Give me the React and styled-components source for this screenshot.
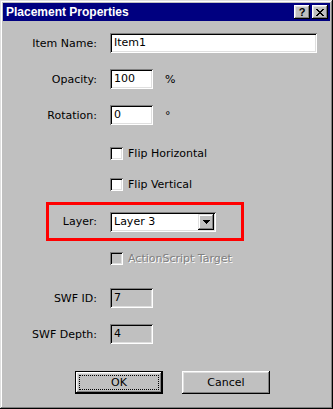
import React from 'react'
import styled, { createGlobalStyle } from 'styled-components'

const Global = createGlobalStyle`
    html, body { margin: 0; padding: 0; background: #c0c0c0; }
    body { font-family: "DejaVu Sans", "Liberation Sans", sans-serif; font-size: 11px; color: #000; }
`

const Window = styled.div`
    width: 333px;
    height: 409px;
    box-sizing: border-box;
    padding: 3px;
    background: #c0c0c0;
    box-shadow: inset -1px -1px #000, inset 1px 1px #dfdfdf, inset -2px -2px #808080, inset 2px 2px #fff;
    display: flex;
    flex-direction: column;
`

const TitleBar = styled.div`
    height: 18px;
    background: #000080;
    display: flex;
    align-items: center;
    padding: 0 2px 0 3px;
`

const Title = styled.div`
    flex: 1;
    color: #fff;
    font-family: "Liberation Sans", Arial, sans-serif;
    font-weight: bold;
    font-size: 12px;
`

const TitleButton = styled.div`
    width: 16px;
    height: 14px;
    box-sizing: border-box;
    margin-left: ${p => p.$gap || 0}px;
    background: #c0c0c0;
    box-shadow: inset -1px -1px #000, inset 1px 1px #fff, inset -2px -2px #808080, inset 2px 2px #dfdfdf;
    display: flex;
    align-items: center;
    justify-content: center;
    font-family: "Liberation Sans", Arial, sans-serif;
    font-weight: bold;
    font-size: 11px;
    line-height: 1;
`

const Body = styled.div`
    display: flex;
    flex-direction: column;
`

const Row = styled.div`
    display: flex;
    align-items: center;
    height: ${p => p.$h || 20}px;
    margin-top: ${p => p.$top}px;
    margin-left: ${p => p.$left || 0}px;
`

const Highlight = styled.div`
    display: flex;
    align-items: center;
    box-sizing: border-box;
    width: 198px;
    height: 39px;
    margin-top: 11px;
    margin-left: 43px;
    border: 3px solid #ff0000;
`

const Label = styled.div`
    width: ${p => p.$w || 94}px;
    margin-right: 13px;
    text-align: right;
    white-space: nowrap;
`

const Field = styled.div`
    width: ${p => p.$w}px;
    height: 20px;
    box-sizing: border-box;
    padding: 2px 0 0 4px;
    background: ${p => (p.$disabled ? '#c0c0c0' : '#fff')};
    box-shadow: inset 1px 1px #808080, inset -1px -1px #fff, inset 2px 2px #000, inset -2px -2px #dfdfdf;
    line-height: 16px;
`

const Unit = styled.div`
    margin-left: 12px;
`

const Select = styled.div`
    width: 106px;
    height: 20px;
    box-sizing: border-box;
    padding: 2px;
    background: #fff;
    box-shadow: inset 1px 1px #808080, inset -1px -1px #fff, inset 2px 2px #000, inset -2px -2px #dfdfdf;
    display: flex;
`

const SelectText = styled.div`
    flex: 1;
    padding-left: 2px;
    line-height: 16px;
`

const DropButton = styled.div`
    width: 16px;
    height: 16px;
    box-sizing: border-box;
    background: #c0c0c0;
    box-shadow: inset -1px -1px #000, inset 1px 1px #dfdfdf, inset -2px -2px #808080, inset 2px 2px #fff;
    display: flex;
    align-items: center;
    justify-content: center;
`

const Box = styled.div`
    width: 13px;
    height: 13px;
    box-sizing: border-box;
    background: ${p => (p.$disabled ? '#c0c0c0' : '#fff')};
    box-shadow: inset 1px 1px #808080, inset -1px -1px #fff, inset 2px 2px #000, inset -2px -2px #dfdfdf;
    margin-right: 5px;
`

const CheckText = styled.div`
    color: ${p => (p.$disabled ? '#808080' : '#000')};
    text-shadow: ${p => (p.$disabled ? '1px 1px 0 #fff' : 'none')};
`

const Buttons = styled.div`
    display: flex;
    margin-top: 27px;
    margin-left: 72px;
    gap: 19px;
`

const Button = styled.div`
    width: 88px;
    height: 23px;
    box-sizing: border-box;
    background: #c0c0c0;
    box-shadow: ${p => (p.$default
        ? 'inset 0 0 0 1px #000, inset -2px -2px #000, inset 2px 2px #fff, inset -3px -3px #808080, inset 3px 3px #dfdfdf'
        : 'inset -1px -1px #000, inset 1px 1px #fff, inset -2px -2px #808080, inset 2px 2px #dfdfdf')};
    display: flex;
    align-items: center;
    justify-content: center;
    padding: ${p => (p.$default ? '4px' : '0')};
`

const Focus = styled.div`
    flex: 1;
    align-self: stretch;
    border: 1px dotted #000;
    display: flex;
    align-items: center;
    justify-content: center;
`

const CloseIcon = () => (
    <svg width="8" height="7" viewBox="0 0 8 7" shapeRendering="crispEdges">
        <path d="M0 0h2v1h-2zM6 0h2v1h-2zM1 1h2v1h-2zM5 1h2v1h-2zM2 2h4v1h-4zM3 3h2v1h-2zM2 4h4v1h-4zM1 5h2v1h-2zM5 5h2v1h-2zM0 6h2v1h-2zM6 6h2v1h-2z" fill="#000" />
    </svg>
)

const Arrow = () => (
    <svg width="7" height="4" viewBox="0 0 7 4" shapeRendering="crispEdges">
        <path d="M0 0h7v1h-7zM1 1h5v1h-5zM2 2h3v1h-3zM3 3h1v1h-1z" fill="#000" />
    </svg>
)

const App = () => {
    return (
        <Window>
            <Global />
            <TitleBar>
                <Title>Placement Properties</Title>
                <TitleButton>?</TitleButton>
                <TitleButton $gap={2}><CloseIcon /></TitleButton>
            </TitleBar>
            <Body>
                <Row $top={12}>
                    <Label>Item Name:</Label>
                    <Field $w={207}>Item1</Field>
                </Row>
                <Row $top={16}>
                    <Label>Opacity:</Label>
                    <Field $w={43}>100</Field>
                    <Unit>%</Unit>
                </Row>
                <Row $top={16}>
                    <Label>Rotation:</Label>
                    <Field $w={43}>0</Field>
                    <Unit>°</Unit>
                </Row>
                <Row $top={22} $h={13} $left={107}>
                    <Box />
                    <CheckText>Flip Horizontal</CheckText>
                </Row>
                <Row $top={18} $h={13} $left={107}>
                    <Box />
                    <CheckText>Flip Vertical</CheckText>
                </Row>
                <Highlight>
                    <Label $w={48}>Layer:</Label>
                    <Select>
                        <SelectText>Layer 3</SelectText>
                        <DropButton><Arrow /></DropButton>
                    </Select>
                </Highlight>
                <Row $top={11} $h={13} $left={107}>
                    <Box $disabled />
                    <CheckText $disabled>ActionScript Target</CheckText>
                </Row>
                <Row $top={23}>
                    <Label>SWF ID:</Label>
                    <Field $w={43} $disabled>7</Field>
                </Row>
                <Row $top={16}>
                    <Label>SWF Depth:</Label>
                    <Field $w={43} $disabled>4</Field>
                </Row>
                <Buttons>
                    <Button $default><Focus>OK</Focus></Button>
                    <Button>Cancel</Button>
                </Buttons>
            </Body>
        </Window>
    )
}

export default App
